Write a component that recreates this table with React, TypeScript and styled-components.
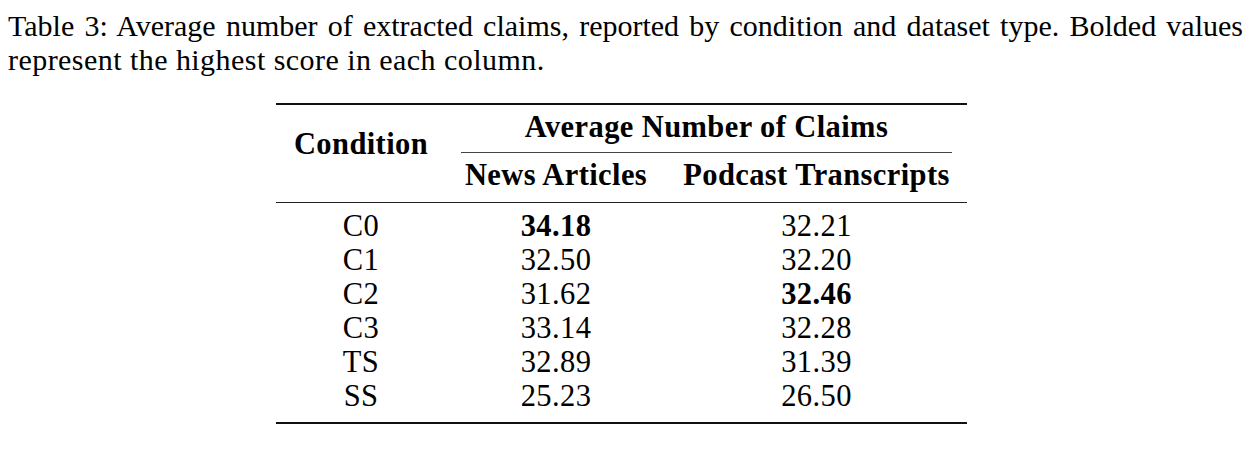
import React from 'react'
import styled, { createGlobalStyle } from 'styled-components'

const GlobalStyle = createGlobalStyle`
  html, body {
    margin: 0;
    padding: 0;
    background: #fff;
  }
  body {
    padding: 9px 8px 0 8px;
    font-family: 'Liberation Serif', 'Times New Roman', serif;
    font-size: 30.5px;
    line-height: 34px;
    color: #000;
  }
`

const Page = styled.div`
  display: flex;
  flex-direction: column;
  align-items: flex-start;
`

const Caption = styled.p`
  margin: 0;
  width: 1235px;
  font-size: 30px;
`

const CaptionLine = styled.span<{ $justified?: boolean }>`
  display: block;
  white-space: nowrap;
  text-align: ${(p) => (p.$justified ? 'justify' : 'left')};
  text-align-last: ${(p) => (p.$justified ? 'justify' : 'left')};
  word-spacing: ${(p) => (p.$justified ? '-1px' : '0')};
  letter-spacing: ${(p) => (p.$justified ? '0' : '0.45px')};
`

const Table = styled.table`
  margin: 26px 0 0 268px;
  border-collapse: separate;
  border-spacing: 0;
  border-top: 2px solid #111;
  border-bottom: 2px solid #111;
  font-size: 30.5px;
  line-height: 34px;
  letter-spacing: 0.4px;
  table-layout: fixed;
  width: 691px;
`

const Col = styled.col<{ $width: number }>`
  width: ${(p) => p.$width}px;
`

const HeadCell = styled.th<{ $top: number; $bottom: number; $rule?: boolean }>`
  padding: ${(p) => `${p.$top}px 0 ${p.$bottom}px 0`};
  font-weight: 700;
  text-align: center;
  vertical-align: top;
  white-space: nowrap;
  border-bottom: ${(p) => (p.$rule ? '1px solid #222' : 'none')};
`

const CmidRule = styled.div`
  height: 1px;
  margin: 8px 15px 0 15px;
  background: #444;
`

const BodyCell = styled.td<{ $bold?: boolean; $first?: boolean; $last?: boolean }>`
  padding: ${(p) => `${p.$first ? 6 : 0}px 0 ${p.$last ? 9 : 0}px 0`};
  text-align: center;
  font-weight: ${(p) => (p.$bold ? 700 : 400)};
  white-space: nowrap;
`

type Row = { cond: string; news: string; podcast: string; bold?: 'news' | 'podcast' }

const rows: Row[] = [
  { cond: 'C0', news: '34.18', podcast: '32.21', bold: 'news' },
  { cond: 'C1', news: '32.50', podcast: '32.20' },
  { cond: 'C2', news: '31.62', podcast: '32.46', bold: 'podcast' },
  { cond: 'C3', news: '33.14', podcast: '32.28' },
  { cond: 'TS', news: '32.89', podcast: '31.39' },
  { cond: 'SS', news: '25.23', podcast: '26.50' },
]

export default function App() {
  return (
    <Page>
      <GlobalStyle />
      <Caption>
        <CaptionLine $justified>
          Table 3: Average number of extracted claims, reported by condition and dataset type. Bolded values
        </CaptionLine>
        <CaptionLine>represent the highest score in each column.</CaptionLine>
      </Caption>
      <Table>
        <colgroup>
          <Col $width={170} />
          <Col $width={220} />
          <Col $width={301} />
        </colgroup>
        <thead>
          <tr>
            <HeadCell rowSpan={2} $top={22} $bottom={0} $rule>
              Condition
            </HeadCell>
            <HeadCell colSpan={2} $top={5} $bottom={0}>
              Average Number of Claims
              <CmidRule />
            </HeadCell>
          </tr>
          <tr>
            <HeadCell $top={5} $bottom={10} $rule>
              News Articles
            </HeadCell>
            <HeadCell $top={5} $bottom={10} $rule>
              Podcast Transcripts
            </HeadCell>
          </tr>
        </thead>
        <tbody>
          {rows.map((r, i) => {
            const first = i === 0
            const last = i === rows.length - 1
            return (
              <tr key={r.cond}>
                <BodyCell $first={first} $last={last}>
                  {r.cond}
                </BodyCell>
                <BodyCell $first={first} $last={last} $bold={r.bold === 'news'}>
                  {r.news}
                </BodyCell>
                <BodyCell $first={first} $last={last} $bold={r.bold === 'podcast'}>
                  {r.podcast}
                </BodyCell>
              </tr>
            )
          })}
        </tbody>
      </Table>
    </Page>
  )
}
